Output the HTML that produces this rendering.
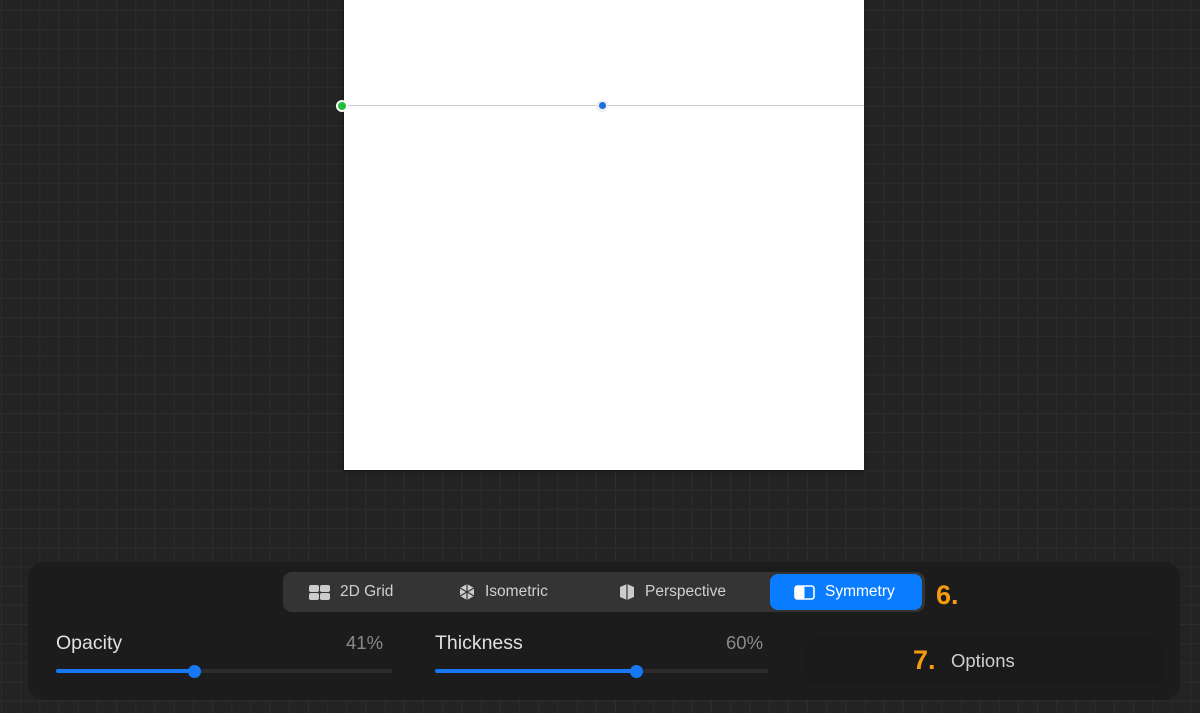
<!DOCTYPE html><html><head><style>
*{margin:0;padding:0;box-sizing:border-box}
body{width:1200px;height:713px;overflow:hidden;position:relative;font-family:"Liberation Sans",sans-serif;
background-color:#232323;
background-image:linear-gradient(to right,#2d2d2d 1px,transparent 1px),linear-gradient(to bottom,#2d2d2d 1px,transparent 1px);
background-size:19.2px 19.2px;background-position:1px 10px}
.canvas{position:absolute;left:344px;top:0;width:520px;height:470px;background:#fff;box-shadow:0 1px 3px rgba(0,0,0,.6)}
.line{position:absolute;left:344px;top:105px;width:520px;height:1px;background:#cfcfcf}
.dot{position:absolute;border-radius:50%}
.panel{position:absolute;left:28px;top:562px;width:1152px;height:138px;background:#1c1c1c;border-radius:16px}
.seg{position:absolute;left:283px;top:572px;width:642px;height:40px;background:#343434;border-radius:9px}
.item{position:absolute;top:572px;height:40px;display:flex;align-items:center;color:#d0d0d0;font-size:15.5px}
.item svg{margin-right:10px}
.act{position:absolute;left:770px;top:574px;width:152px;height:36px;background:#0a7cff;border-radius:8px}
.lbl{position:absolute;color:#e0e0e0;font-size:19.5px}
.pct{position:absolute;color:#8a8a8a;font-size:18.5px}
.track{position:absolute;height:4px;background:#2c2c2c;border-radius:2px}
.fill{position:absolute;height:4px;background:#1877f2;border-radius:2px}
.knob{position:absolute;width:13px;height:13px;border-radius:50%;background:#1877f2}
.num{position:absolute;color:#f59b0e;font-weight:bold;font-size:27px}
.opt{position:absolute;left:806px;top:637px;width:356px;height:47px;background:#1a1a1a;border-radius:10px}
</style></head><body>
<div class="canvas"></div><div class="line"></div>
<div class="dot" style="left:336px;top:100px;width:12px;height:12px;background:#fff"></div>
<div class="dot" style="left:338px;top:102px;width:8px;height:8px;background:#22c03a"></div>
<div class="dot" style="left:596px;top:100px;width:12px;height:12px;background:#eee"></div>
<div class="dot" style="left:599px;top:102px;width:7px;height:7px;background:#1a6fe0"></div>
<div class="panel"></div>
<div class="seg"></div><div class="act"></div>
<div class="item" style="left:309px"><svg width="21" height="15" viewBox="0 0 21 15"><rect x="0" y="0" width="10" height="7" rx="2" fill="#ccc"/><rect x="11" y="0" width="10" height="7" rx="2" fill="#ccc"/><rect x="0" y="8" width="10" height="7" rx="2" fill="#ccc"/><rect x="11" y="8" width="10" height="7" rx="2" fill="#ccc"/></svg>2D Grid</div>
<div class="item" style="left:459px"><svg width="16" height="16" viewBox="0 0 16 16"><polygon points="8,0 15,4 15,12 8,16 1,12 1,4" fill="#ccc"/><path d="M8 0V16M1 4L15 12M15 4L1 12" stroke="#343434" stroke-width="1.2"/></svg>Isometric</div>
<div class="item" style="left:619px"><svg width="16" height="16" viewBox="0 0 16 16"><polygon points="8,0 15,3 15,13 8,16 1,13 1,3" fill="#ccc"/><path d="M8 0V16" stroke="#343434" stroke-width="1.2"/></svg>Perspective</div>
<div class="item" style="left:794px;color:#fff"><svg width="21" height="15" viewBox="0 0 21 15"><rect x="1" y="1" width="19" height="13" rx="2.5" fill="none" stroke="#fff" stroke-width="1.6"/><rect x="1" y="1" width="9.5" height="13" rx="2" fill="#fff"/></svg>Symmetry</div>
<div class="num" style="left:936px;top:580px">6.</div>
<div class="lbl" style="left:56px;top:632px">Opacity</div>
<div class="pct" style="left:346px;top:632px">41%</div>
<div class="track" style="left:56px;top:669px;width:336px"></div>
<div class="fill" style="left:56px;top:669px;width:138px"></div>
<div class="knob" style="left:188px;top:665px"></div>
<div class="lbl" style="left:435px;top:632px">Thickness</div>
<div class="pct" style="left:726px;top:632px">60%</div>
<div class="track" style="left:435px;top:669px;width:333px"></div>
<div class="fill" style="left:435px;top:669px;width:201px"></div>
<div class="knob" style="left:630px;top:665px"></div>
<div class="opt"></div>
<div class="num" style="left:913px;top:645px">7.</div>
<div class="lbl" style="left:951px;top:650px;font-size:18.5px;color:#cfcfcf">Options</div>
</body></html>
